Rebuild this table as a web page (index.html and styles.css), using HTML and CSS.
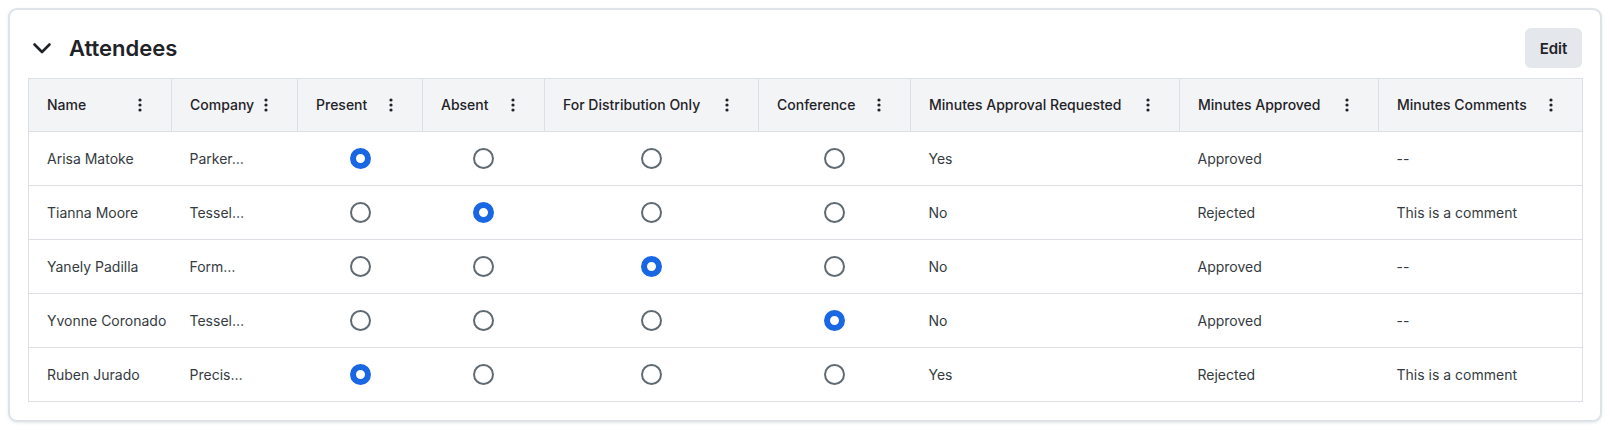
FILE: index.html
```html
<!DOCTYPE html>
<html lang="en">
<head>
<meta charset="utf-8">
<title>Attendees</title>
<link rel="stylesheet" href="styles.css">
</head>
<body>
<div class="page">
  <section class="card">
    <header class="card-head">
      <div class="title">
        <span class="chev"><svg width="24" height="24" viewBox="0 0 24 24"><path d="M4.5 8.5 L12 16 L19.5 8.5" fill="none" stroke="#1f2328" stroke-width="2.6" stroke-linecap="round" stroke-linejoin="round"/></svg></span>
        <h2>Attendees</h2>
      </div>
      <button class="edit">Edit</button>
    </header>
    <table class="grid">
      <colgroup>
        <col class="c-name"><col class="c-company"><col class="c-present"><col class="c-absent"><col class="c-dist"><col class="c-conf"><col class="c-mar"><col class="c-ma"><col class="c-mc">
      </colgroup>
      <thead>
        <tr>
          <th><div class="th"><span>Name</span><span class="kebab"><svg width="24" height="24" viewBox="0 0 24 24"><circle cx="12" cy="7" r="1.6"/><circle cx="12" cy="12" r="1.6"/><circle cx="12" cy="17" r="1.6"/></svg></span></div></th>
          <th><div class="th"><span>Company</span><span class="kebab"><svg width="24" height="24" viewBox="0 0 24 24"><circle cx="12" cy="7" r="1.6"/><circle cx="12" cy="12" r="1.6"/><circle cx="12" cy="17" r="1.6"/></svg></span></div></th>
          <th><div class="th"><span>Present</span><span class="kebab"><svg width="24" height="24" viewBox="0 0 24 24"><circle cx="12" cy="7" r="1.6"/><circle cx="12" cy="12" r="1.6"/><circle cx="12" cy="17" r="1.6"/></svg></span></div></th>
          <th><div class="th"><span>Absent</span><span class="kebab"><svg width="24" height="24" viewBox="0 0 24 24"><circle cx="12" cy="7" r="1.6"/><circle cx="12" cy="12" r="1.6"/><circle cx="12" cy="17" r="1.6"/></svg></span></div></th>
          <th><div class="th"><span>For Distribution Only</span><span class="kebab"><svg width="24" height="24" viewBox="0 0 24 24"><circle cx="12" cy="7" r="1.6"/><circle cx="12" cy="12" r="1.6"/><circle cx="12" cy="17" r="1.6"/></svg></span></div></th>
          <th><div class="th"><span>Conference</span><span class="kebab"><svg width="24" height="24" viewBox="0 0 24 24"><circle cx="12" cy="7" r="1.6"/><circle cx="12" cy="12" r="1.6"/><circle cx="12" cy="17" r="1.6"/></svg></span></div></th>
          <th><div class="th"><span>Minutes Approval Requested</span><span class="kebab"><svg width="24" height="24" viewBox="0 0 24 24"><circle cx="12" cy="7" r="1.6"/><circle cx="12" cy="12" r="1.6"/><circle cx="12" cy="17" r="1.6"/></svg></span></div></th>
          <th><div class="th"><span>Minutes Approved</span><span class="kebab"><svg width="24" height="24" viewBox="0 0 24 24"><circle cx="12" cy="7" r="1.6"/><circle cx="12" cy="12" r="1.6"/><circle cx="12" cy="17" r="1.6"/></svg></span></div></th>
          <th><div class="th"><span>Minutes Comments</span><span class="kebab"><svg width="24" height="24" viewBox="0 0 24 24"><circle cx="12" cy="7" r="1.6"/><circle cx="12" cy="12" r="1.6"/><circle cx="12" cy="17" r="1.6"/></svg></span></div></th>
        </tr>
      </thead>
      <tbody>
        <tr>
          <td>Arisa Matoke</td><td>Parker…</td>
          <td class="ctr"><span class="radio on"></span></td>
          <td class="ctr"><span class="radio"></span></td>
          <td class="ctr"><span class="radio"></span></td>
          <td class="ctr"><span class="radio"></span></td>
          <td>Yes</td><td>Approved</td><td>--</td>
        </tr>
        <tr>
          <td>Tianna Moore</td><td>Tessel…</td>
          <td class="ctr"><span class="radio"></span></td>
          <td class="ctr"><span class="radio on"></span></td>
          <td class="ctr"><span class="radio"></span></td>
          <td class="ctr"><span class="radio"></span></td>
          <td>No</td><td>Rejected</td><td>This is a comment</td>
        </tr>
        <tr>
          <td>Yanely Padilla</td><td>Form…</td>
          <td class="ctr"><span class="radio"></span></td>
          <td class="ctr"><span class="radio"></span></td>
          <td class="ctr"><span class="radio on"></span></td>
          <td class="ctr"><span class="radio"></span></td>
          <td>No</td><td>Approved</td><td>--</td>
        </tr>
        <tr>
          <td>Yvonne Coronado</td><td>Tessel…</td>
          <td class="ctr"><span class="radio"></span></td>
          <td class="ctr"><span class="radio"></span></td>
          <td class="ctr"><span class="radio"></span></td>
          <td class="ctr"><span class="radio on"></span></td>
          <td>No</td><td>Approved</td><td>--</td>
        </tr>
        <tr>
          <td>Ruben Jurado</td><td>Precis…</td>
          <td class="ctr"><span class="radio on"></span></td>
          <td class="ctr"><span class="radio"></span></td>
          <td class="ctr"><span class="radio"></span></td>
          <td class="ctr"><span class="radio"></span></td>
          <td>Yes</td><td>Rejected</td><td>This is a comment</td>
        </tr>
      </tbody>
    </table>
  </section>
</div>
</body>
</html>
```

FILE: styles.css
```css
* { box-sizing: border-box; }
html, body { margin: 0; background: #ffffff; }
body {
  font-family: Inter, "Noto Sans", "Liberation Sans", sans-serif;
  color: #1f2328;
}
.page { padding: 8px; }
.card {
  border: 2px solid #dde3e8;
  border-radius: 9px;
  padding: 18px 18px 18px 18px;
  background: #fff;
  box-shadow: 0 1px 3px rgba(60, 80, 100, 0.12);
}
.card-head {
  display: flex;
  align-items: center;
  justify-content: space-between;
  height: 40px;
  margin-bottom: 10px;
}
.title { display: flex; align-items: center; gap: 15px; padding-left: 2px; }
.chev { display: flex; width: 24px; height: 24px; }
.title h2 {
  margin: 0;
  font-size: 22px;
  font-weight: 600;
  color: #1f2328;
  letter-spacing: 0;
}
.edit {
  width: 57px;
  height: 40px;
  border: none;
  border-radius: 6px;
  background: #e4e7eb;
  font-family: Inter, "Noto Sans", sans-serif;
  font-size: 15px;
  font-weight: 600;
  color: #1f2328;
  padding: 0;
}
.grid {
  width: 1554px;
  table-layout: fixed;
  border-collapse: collapse;
  border: 1px solid #dcdfe3;
}
.c-name { width: 143px; }
.c-company { width: 126px; }
.c-present { width: 125px; }
.c-absent { width: 122px; }
.c-dist { width: 214px; }
.c-conf { width: 152px; }
.c-mar { width: 269px; }
.c-ma { width: 199px; }
.c-mc { width: 204px; }
.grid th {
  height: 52.5px;
  padding: 0 19px 0 18px;
  background: #f3f4f6;
  border-left: 1px solid #dcdfe3;
  border-bottom: 1px solid #dcdfe3;
  text-align: left;
  font-size: 14px;
  font-weight: 500;
  color: #1f2328;
  white-space: nowrap;
}
.th { display: flex; align-items: center; justify-content: space-between; }
.kebab { display: flex; width: 24px; height: 24px; fill: #1f2328; flex: none; }
.grid td {
  height: 54.2px;
  padding: 0 19px 0 18px;
  border-bottom: 1px solid #dcdfe3;
  font-size: 14px;
  color: #353b41;
  white-space: nowrap;
}
.grid td.ctr { text-align: center; padding: 0; }
.radio {
  display: inline-block;
  vertical-align: middle;
  width: 21px;
  height: 21px;
  border-radius: 50%;
  border: 2px solid #5f6a72;
}
.radio.on {
  border: 6.5px solid #1967e3;
  background: #fff;
}
```
